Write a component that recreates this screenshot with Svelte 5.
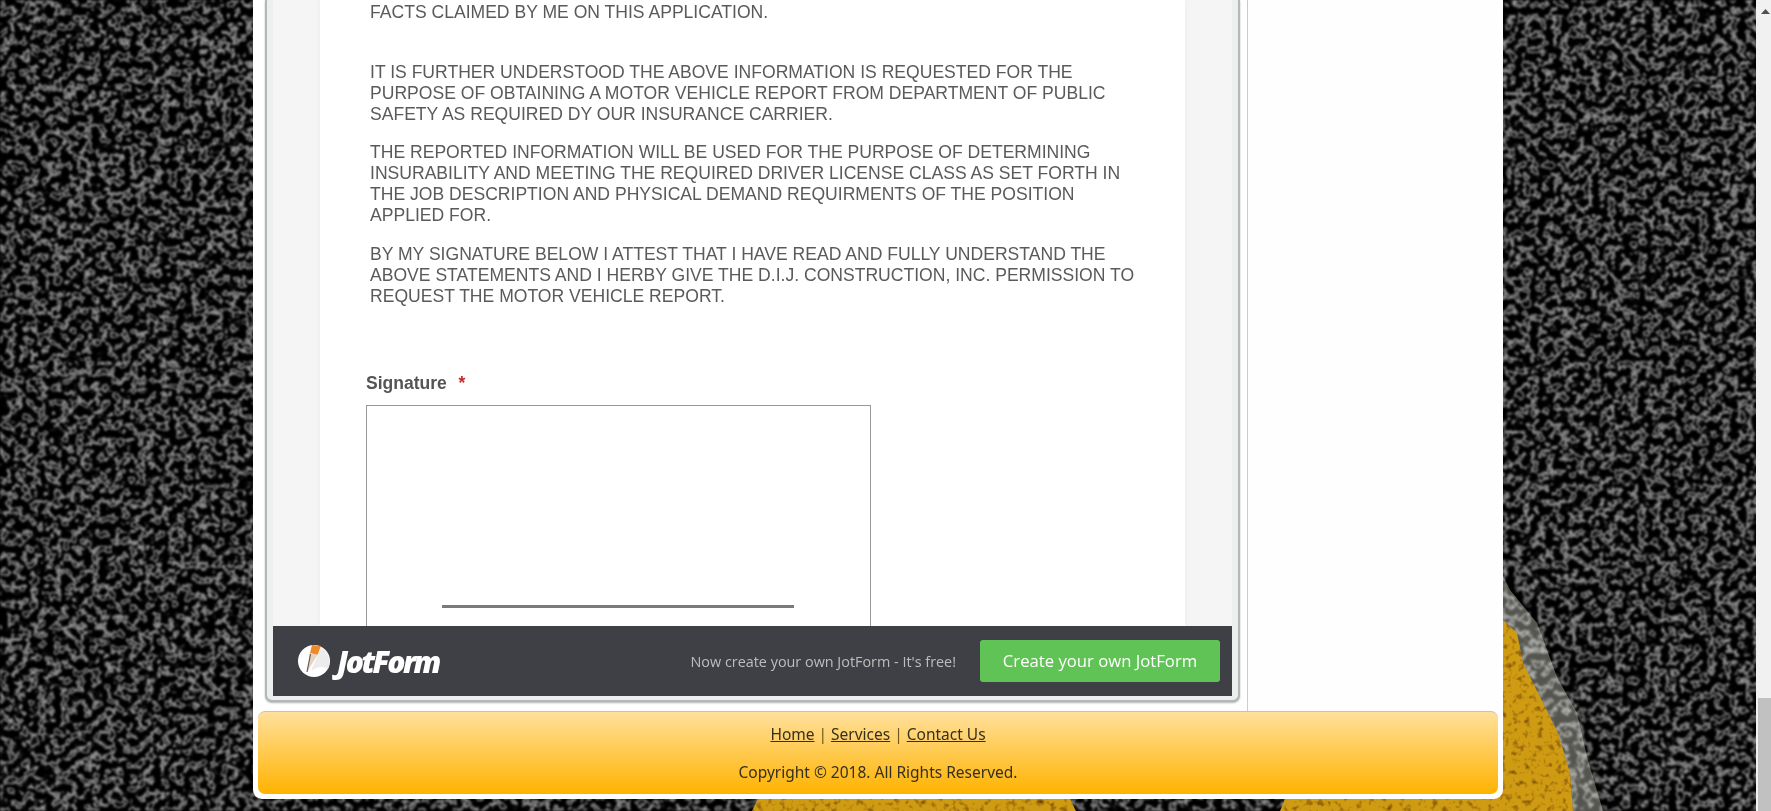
<script>
  let links = ["Home", "Services", "Contact Us"];
</script>

<div class="page">
  <svg class="bg" viewBox="0 0 1771 811" aria-hidden="true">
    <defs>
      <filter id="asphalt" x="0" y="0" width="100%" height="100%" color-interpolation-filters="sRGB">
        <feTurbulence type="fractalNoise" baseFrequency="0.13" numOctaves="2" seed="11" />
        <feColorMatrix values="1 0 0 0 0  1 0 0 0 0  1 0 0 0 0  0 0 0 0 1" />
        <feComponentTransfer>
          <feFuncR type="table" tableValues="0 0 0 0 0 0 0 0 0 0.01 0.06 0.4 0.62 0.4 0.16 0.08 0.03 0 0 0 0" />
          <feFuncG type="table" tableValues="0 0 0 0 0 0 0 0 0 0.01 0.06 0.4 0.62 0.4 0.16 0.08 0.03 0 0 0 0" />
          <feFuncB type="table" tableValues="0 0 0 0 0 0 0 0 0 0.01 0.06 0.4 0.62 0.4 0.16 0.08 0.03 0 0 0 0" />
        </feComponentTransfer>
        <feGaussianBlur stdDeviation="1.1" />
      </filter>
      <filter id="specks" x="0" y="0" width="100%" height="100%" color-interpolation-filters="sRGB">
        <feTurbulence type="fractalNoise" baseFrequency="0.16" numOctaves="2" seed="4" />
        <feColorMatrix values="0 0 0 0 0.42  0 0 0 0 0.25  0 0 0 0 0.02  2.4 0 0 0 -1.25" />
        <feGaussianBlur stdDeviation="0.7" />
      </filter>
      <clipPath id="paint">
        <polygon points="1490,610 1503,620 1517,633 1523,663 1543,703 1558,733 1570,773 1573,811 1280,811 1285,799 1490,799" />
        <polygon points="752,811 758,799 1070,799 1076,811" />
      </clipPath>
    </defs>
    <rect width="1771" height="811" filter="url(#asphalt)" />
    <polygon class="edge" points="1495,560 1510,590 1537,623 1557,677 1577,713 1587,757 1603,811 1573,811 1570,773 1490,640" />
    <g clip-path="url(#paint)">
      <rect class="paint" width="1771" height="811" />
      <rect width="1771" height="811" filter="url(#specks)" />
    </g>
  </svg>

  <div class="viewport">
    <div class="wrapper">
      <div class="main">
        <div class="frame">
          <div class="form_area">
            <div class="paper">
              <p class="first">FACTS CLAIMED BY ME ON THIS APPLICATION.</p>
              <p>
                IT IS FURTHER UNDERSTOOD THE ABOVE INFORMATION IS REQUESTED FOR THE<br>
                PURPOSE OF OBTAINING A MOTOR VEHICLE REPORT FROM DEPARTMENT OF PUBLIC<br>
                SAFETY AS REQUIRED DY OUR INSURANCE CARRIER.
              </p>
              <p class="third">
                THE REPORTED INFORMATION WILL BE USED FOR THE PURPOSE OF DETERMINING<br>
                INSURABILITY AND MEETING THE REQUIRED DRIVER LICENSE CLASS AS SET FORTH IN<br>
                THE JOB DESCRIPTION AND PHYSICAL DEMAND REQUIRMENTS OF THE POSITION<br>
                APPLIED FOR.
              </p>
              <p>
                BY MY SIGNATURE BELOW I ATTEST THAT I HAVE READ AND FULLY UNDERSTAND THE<br>
                ABOVE STATEMENTS AND I HERBY GIVE THE D.I.J. CONSTRUCTION, INC. PERMISSION TO<br>
                REQUEST THE MOTOR VEHICLE REPORT.
              </p>
              <div class="sig_label">Signature <span class="req">*</span></div>
              <div class="sig_box"><div class="sig_line"></div></div>
            </div>
          </div>
          <div class="jf_bar">
            <div class="jf_logo">
              <svg width="34" height="34" viewBox="0 0 34 34" aria-hidden="true">
                <circle cx="17" cy="17" r="16" fill="#fff" />
                <path d="M24 4 A16 16 0 0 1 31 25 Q24 20 14 27 Z" fill="#ececec" />
                <path d="M15 1 L24 2 L20.5 11 L13 9 Z" fill="#ee8a2a" />
                <path d="M13 9 L20.5 11 L10 28 Z" fill="#e3d3c3" />
                <path d="M13.5 10 L10 28" stroke="#6b5a4c" stroke-width="1.2" fill="none" />
              </svg>
              <span class="jf_name">JotForm</span>
            </div>
            <div class="jf_right">
              <span class="jf_tag">Now create your own JotForm - It's free!</span>
              <span class="jf_btn">Create your own JotForm</span>
            </div>
          </div>
        </div>
        <div class="sidebar"></div>
      </div>
      <div class="footer">
        <div class="foot_links">
          {#each links as link, n}
            {#if n > 0}<span class="sep">|</span>{/if}
            <span class="foot_link">{link}</span>
          {/each}
        </div>
        <div class="copy">Copyright © 2018. All Rights Reserved.</div>
      </div>
    </div>
  </div>

  <div class="scrollbar">
    <svg class="arrow" width="9" height="5" viewBox="0 0 9 5" aria-hidden="true">
      <polygon points="4.5,0 9,5 0,5" fill="#505050" />
    </svg>
    <div class="thumb"></div>
  </div>
</div>

<style>
  :global(body) {
    margin: 0;
    overflow: hidden;
    background: #000;
  }

  .page {
    position: relative;
    display: flex;
    width: 1771px;
    height: 811px;
    overflow: hidden;
    font-family: "Liberation Sans", Arial, sans-serif;
  }

  .bg {
    position: absolute;
    left: 0;
    top: 0;
    width: 1771px;
    height: 811px;
  }

  .edge {
    fill: #55554f;
    mix-blend-mode: screen;
  }

  .paint {
    fill: #cf9b12;
  }

  .viewport {
    position: relative;
    flex: 1;
    padding-left: 253px;
  }

  .wrapper {
    width: 1250px;
    height: 799px;
    box-sizing: border-box;
    padding: 0 5px 5px;
    background: #fff;
    border-radius: 0 0 9px 9px;
  }

  .main {
    display: flex;
    height: 711px;
  }

  .frame {
    display: flex;
    flex-direction: column;
    box-sizing: border-box;
    width: 975px;
    height: 702px;
    margin-left: 7px;
    padding: 0 6px 4px 6px;
    background: #edefef;
    border: 2px solid #b4b7b7;
    border-width: 0 2px 2px;
    border-radius: 0 0 7px 7px;
    box-shadow: 0 1px 2px rgba(0, 0, 0, 0.3);
  }

  .form_area {
    flex: none;
    height: 626px;
    overflow: hidden;
    padding: 0 47px 0 47px;
    background: #f5f5f5;
  }

  .paper {
    height: 100%;
    box-sizing: border-box;
    padding: 2px 0 0 50px;
    background: #fff;
    box-shadow: 0 0 6px rgba(0, 0, 0, 0.05);
    color: #5a5a5a;
    font-size: 17.57px;
    line-height: 21px;
  }

  .paper p {
    margin: 0 0 17px;
    white-space: nowrap;
  }

  .paper p.first {
    margin-bottom: 39px;
  }

  .paper p.third {
    margin-bottom: 18px;
  }

  .sig_label {
    margin: 66px 0 0 -4px;
    font-size: 17.5px;
    font-weight: 700;
    color: #555;
  }

  .req {
    margin-left: 7px;
    color: #c92a2a;
  }

  .sig_box {
    box-sizing: border-box;
    display: flex;
    align-items: flex-start;
    justify-content: center;
    width: 505px;
    height: 240px;
    margin: 11px 0 0 -4px;
    padding-top: 199px;
    border: 1px solid #999;
    background: #fff;
  }

  .sig_line {
    width: 352px;
    height: 3px;
    margin-right: 2px;
    background: #7a7a7a;
  }

  .jf_bar {
    flex: none;
    display: flex;
    align-items: center;
    justify-content: space-between;
    height: 70px;
    padding: 0 12px 0 24px;
    background: #3f4045;
  }

  .jf_logo {
    display: flex;
    align-items: center;
    gap: 6px;
  }

  .jf_name {
    font-family: "Open Sans", sans-serif;
    font-size: 30px;
    font-weight: 800;
    font-style: italic;
    letter-spacing: -2.5px;
    color: #fff;
  }

  .jf_right {
    display: flex;
    align-items: center;
    gap: 24px;
    font-family: "Open Sans", sans-serif;
  }

  .jf_tag {
    font-size: 14.4px;
    color: #bdbdbd;
  }

  .jf_btn {
    display: block;
    width: 240px;
    height: 42px;
    line-height: 42px;
    text-align: center;
    font-size: 16.7px;
    color: #fff;
    background: #5fc455;
    border-radius: 3px;
  }

  .sidebar {
    flex: 1;
    margin-left: 7px;
    border-left: 1px solid #ccc;
    background: #fefefe;
  }

  .footer {
    display: flex;
    flex-direction: column;
    align-items: center;
    box-sizing: border-box;
    height: 83px;
    padding-top: 12px;
    border: 1px solid #c9c3b0;
    border-width: 1px 0 0;
    border-radius: 7px;
    background: linear-gradient(to bottom, #ffe09c, #ffb300);
    font-family: "Noto Sans", "Open Sans", sans-serif;
    font-size: 15.5px;
    color: #33301f;
  }

  .foot_links {
    display: flex;
    gap: 4px;
    line-height: 20px;
  }

  .foot_link {
    text-decoration: underline;
  }

  .sep {
    color: #6a5a20;
  }

  .copy {
    margin-top: 18px;
    line-height: 20px;
  }

  .scrollbar {
    position: relative;
    display: flex;
    flex-direction: column;
    width: 15px;
    background: #f1f1f1;
  }

  .arrow {
    flex: none;
    display: block;
    margin: 9px 0 0 5px;
  }

  .thumb {
    flex: none;
    width: 13px;
    height: 113px;
    margin: 684px 0 0 2px;
    background: #c1c1c1;
  }
</style>
